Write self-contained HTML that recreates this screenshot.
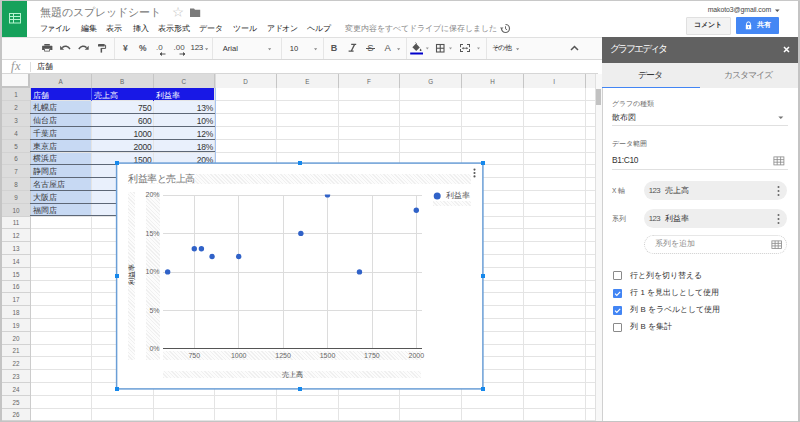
<!DOCTYPE html>
<html lang="ja">
<head>
<meta charset="utf-8">
<style>
html,body{margin:0;padding:0;}
body{width:800px;height:422px;overflow:hidden;position:relative;background:#fff;font-family:"Liberation Sans",sans-serif;color:#333;}
.a{position:absolute;}
.t{position:absolute;white-space:nowrap;line-height:1;}
.sep{position:absolute;width:0.8px;background:#e6e6e6;}
</style>
</head>
<body>
<!-- ===== title bar ===== -->
<div class="a" style="left:2px;top:1px;width:24.5px;height:35.5px;background:#16a15b;"></div>
<svg class="a" style="left:0;top:0" width="30" height="40">
  <g stroke="#b6f5d0" stroke-width="1" fill="none">
    <rect x="9.5" y="13.5" width="11" height="9.5"/>
    <line x1="13.5" y1="13.5" x2="13.5" y2="23"/>
    <line x1="9.5" y1="16.5" x2="20.5" y2="16.5"/>
    <line x1="9.5" y1="19.5" x2="20.5" y2="19.5"/>
  </g>
</svg>
<div class="t" style="left:39.5px;top:7px;font-size:11px;color:#777;">無題のスプレッドシート</div>
<div class="t" style="left:172px;top:6px;font-size:12px;color:#c8c8c8;">☆</div>
<svg class="a" style="left:189px;top:8px" width="12" height="10"><path d="M1 0.5h4l1 1.3h5.2v7.2H1z" fill="#7a7a7a"/></svg>

<div class="t" style="left:39.5px;top:25px;font-size:7.7px;color:#222;letter-spacing:-0.37px;">ファイル</div>
<div class="t" style="left:81px;top:25px;font-size:7.7px;color:#222;">編集</div>
<div class="t" style="left:106px;top:25px;font-size:7.7px;color:#222;">表示</div>
<div class="t" style="left:132.5px;top:25px;font-size:7.7px;color:#222;">挿入</div>
<div class="t" style="left:157.5px;top:25px;font-size:7.7px;color:#222;">表示形式</div>
<div class="t" style="left:199px;top:25px;font-size:7.7px;color:#222;">データ</div>
<div class="t" style="left:233px;top:25px;font-size:7.7px;color:#222;">ツール</div>
<div class="t" style="left:267px;top:25px;font-size:7.7px;color:#222;letter-spacing:-0.5px;">アドオン</div>
<div class="t" style="left:307px;top:25px;font-size:7.7px;color:#222;">ヘルプ</div>
<div class="t" style="left:345px;top:25px;font-size:7.9px;color:#888;">変更内容をすべてドライブに保存しました</div>
<svg class="a" style="left:500px;top:23px" width="11" height="11" viewBox="0 0 11 11"><path d="M5.5 1.5a4 4 0 1 1-4 4" fill="none" stroke="#666" stroke-width="1.2"/><path d="M0 4.5l1.5 2 2-2z" fill="#666"/><path d="M5.5 3.3v2.5l1.6 1" fill="none" stroke="#666" stroke-width="1"/></svg>

<div class="t" style="left:707.7px;top:7px;font-size:6.9px;color:#444;letter-spacing:-0.08px;">makoto3@gmail.com</div>
<svg class="a" style="left:774.5px;top:8.5px" width="5" height="4"><path d="M0 0.5h4.6l-2.3 2.6z" fill="#555"/></svg>
<div class="a" style="left:686.3px;top:16.5px;width:42.5px;height:16.2px;background:#f3f3f3;border:0.6px solid #e0e0e0;border-radius:1px;"></div>
<div class="t" style="left:694px;top:22px;font-size:6.9px;color:#333;font-weight:bold;">コメント</div>
<div class="a" style="left:735.5px;top:16.5px;width:43.5px;height:17.2px;background:#4487f4;border-radius:1px;"></div>
<svg class="a" style="left:745px;top:20.5px" width="7" height="9" viewBox="0 0 7 9"><path d="M1.6 4V2.8a1.9 1.9 0 0 1 3.8 0V4" fill="none" stroke="#fff" stroke-width="1"/><rect x="0.8" y="4" width="5.4" height="4.3" fill="#fff"/><rect x="3" y="5.4" width="1" height="1.4" fill="#4a8af4"/></svg>
<div class="t" style="left:756.5px;top:22px;font-size:6.9px;color:#fff;font-weight:bold;">共有</div>

<!-- ===== toolbar ===== -->
<div class="a" style="left:2px;top:37px;width:600px;height:21.3px;background:#fafafa;border-top:0.8px solid #e0e0e0;border-bottom:0.8px solid #d8d8d8;"></div>


<!-- toolbar icons -->
<svg class="a" style="left:0;top:0" width="120" height="60">
 <g fill="#555">
  <rect x="44.3" y="44" width="5.5" height="1.6"/>
  <path d="M42.6 45.8h9.3a0.5 0.5 0 0 1 0.5 0.5V50h-2.3v-1.8h-5.8V50h-2.2V46.3a0.5 0.5 0 0 1 0.5-0.5z"/>
  <path d="M44.2 48.2h5.6v3.4h-5.6zM45 49v1.8h4V49z" fill-rule="evenodd"/>
 </g>
 <path d="M62.2 47.6c2.6-2 5.6-1.9 7.8 1.4" fill="none" stroke="#555" stroke-width="1.4"/>
 <path d="M60.1 45.8v4h4z" fill="#555"/>
 <path d="M86.6 47.6c-2.6-2-5.6-1.9-7.8 1.4" fill="none" stroke="#555" stroke-width="1.4"/>
 <path d="M88.7 45.8v4h-4z" fill="#555"/>
 <rect x="98" y="44" width="6.6" height="2.6" rx="0.4" fill="#555"/>
 <path d="M104.4 45.3h1.2v3.1h-4.3v1" fill="none" stroke="#555" stroke-width="1"/>
 <rect x="100.6" y="48.3" width="1.5" height="4.3" fill="#555"/>
</svg>
<div class="sep" style="left:113.5px;top:38px;height:21px;"></div>
<div class="t" style="left:123px;top:43.5px;font-size:8.5px;color:#555;font-weight:bold;">¥</div>
<div class="t" style="left:138.9px;top:43.8px;font-size:8.5px;color:#555;font-weight:bold;">%</div>
<div class="t" style="left:156px;top:44.3px;font-size:8px;color:#555;">.0</div>
<svg class="a" style="left:159px;top:52px" width="7" height="4"><path d="M6.5 2H1.5M3 0.5L1 2l2 1.5" stroke="#555" stroke-width="1" fill="#555"/></svg>
<div class="t" style="left:173.5px;top:44.3px;font-size:8px;color:#555;">.00</div>
<svg class="a" style="left:178.5px;top:52px" width="7" height="4"><path d="M0.5 2H5.5M4 0.5L6 2l-2 1.5" stroke="#555" stroke-width="1" fill="#555"/></svg>
<div class="t" style="left:190.5px;top:44.3px;font-size:8px;color:#444;letter-spacing:-0.3px;">123</div>
<svg class="a" style="left:204.6px;top:47.8px" width="4" height="3"><path d="M0 0.3h3.2l-1.6 2z" fill="#888"/></svg>
<div class="sep" style="left:212.2px;top:38px;height:21px;"></div>
<div class="t" style="left:222.7px;top:44.6px;font-size:7.6px;color:#333;">Arial</div>
<svg class="a" style="left:268.3px;top:47.5px" width="4" height="3"><path d="M0 0.3h3.2l-1.6 2z" fill="#888"/></svg>
<div class="sep" style="left:280.5px;top:38px;height:21px;"></div>
<div class="t" style="left:289.8px;top:44.6px;font-size:7.6px;color:#333;">10</div>
<svg class="a" style="left:314px;top:47.5px" width="4" height="3"><path d="M0 0.3h3.2l-1.6 2z" fill="#888"/></svg>
<div class="sep" style="left:322.6px;top:38px;height:21px;"></div>
<div class="t" style="left:330.8px;top:43.8px;font-size:9px;color:#555;font-weight:bold;">B</div>
<svg class="a" style="left:0;top:0" width="360" height="60"><path d="M351.2 44.4h5M348.6 51.2h5M354.6 44.4l-3.4 6.8" stroke="#555" stroke-width="1.3" fill="none"/></svg>
<div class="t" style="left:367.2px;top:43.2px;font-size:9.5px;color:#555;">S</div><div class="a" style="left:366px;top:47.6px;width:9px;height:1.1px;background:#555;"></div>
<div class="t" style="left:384.5px;top:43px;font-size:9.5px;color:#555;">A</div>
<svg class="a" style="left:397.3px;top:47.5px" width="4" height="3"><path d="M0 0.3h3.2l-1.6 2z" fill="#888"/></svg>
<div class="sep" style="left:406.2px;top:38px;height:21px;"></div>
<svg class="a" style="left:0;top:0" width="490" height="60">
 <path d="M415.6 42.6l1 1" stroke="#555" stroke-width="1"/>
 <path d="M416 43.6l3.8 3.8-3.6 3.6-3.8-3.8z" fill="#555"/>
 <path d="M420.6 48.6c0.5 0.7 0.9 1.2 0.9 1.6a0.9 0.9 0 0 1-1.8 0c0-0.4 0.4-0.9 0.9-1.6z" fill="#555"/>
 <rect x="410.2" y="52.5" width="12.8" height="2" fill="#0000cc"/>
 <path d="M425.8 47.6h3l-1.5 1.8z" fill="#999"/>
 <g fill="none" stroke="#555" stroke-width="1.1"><rect x="436.5" y="44.5" width="7.5" height="7.5"/><line x1="440.25" y1="44.5" x2="440.25" y2="52"/><line x1="436.5" y1="48.25" x2="444" y2="48.25"/></g>
 <path d="M449 47.6h3l-1.5 1.8z" fill="#999"/>
 <g fill="#555"><path d="M460 44h3v1h-2v2.2h-1zM460 49h1v2h2v1h-3zM467 44h3v3.2h-1V45h-2zM469 49h1v3h-3v-1h2z"/><path d="M461.8 48.2l1.8-1.3v2.6zM468.2 48.2l-1.8-1.3v2.6z"/><rect x="463" y="47.8" width="4" height="0.8"/></g>
 <path d="M477 47.6h3l-1.5 1.8z" fill="#999"/>
</svg>
<div class="sep" style="left:486px;top:38px;height:21px;"></div>
<div class="t" style="left:491.6px;top:44px;font-size:7.2px;color:#222;letter-spacing:-0.1px;">その他</div>
<svg class="a" style="left:516px;top:47.5px" width="4" height="3"><path d="M0 0.3h3.2l-1.6 2z" fill="#888"/></svg>
<svg class="a" style="left:570px;top:45px" width="9" height="6" viewBox="0 0 9 6"><path d="M1 5l3.5-3.5L8 5" fill="none" stroke="#555" stroke-width="1.5"/></svg>

<!-- ===== grid ===== -->
<div id="grid">
<div class="a" style="left:2px;top:73.5px;width:593px;height:14.5px;background:#f3f3f3;"></div>
<div class="a" style="left:30px;top:73.5px;width:185.5px;height:14.5px;background:#dcdcdc;"></div>
<div class="a" style="left:2px;top:88px;width:28px;height:334px;background:#f3f3f3;"></div>
<div class="a" style="left:2px;top:88px;width:28px;height:128px;background:#dcdcdc;"></div>
<div class="a" style="left:2px;top:73.5px;width:26px;height:12.5px;background:#f8f8f8;"></div>
<div class="a" style="left:28px;top:73.5px;width:2px;height:14.5px;background:#c4c4c4;"></div>
<div class="a" style="left:2px;top:86px;width:28px;height:2px;background:#c4c4c4;"></div>
<div class="a" style="left:30px;top:88.3px;width:185.2px;height:12.6px;background:#1818e6;"></div>
<div class="a" style="left:30px;top:100.8px;width:61.25px;height:115.2px;background:#c7d9f3;"></div>
<div class="a" style="left:91.25px;top:100.8px;width:123.95px;height:115.2px;background:#e9f0fc;"></div>
<div class="a" style="left:30px;top:100.30px;width:565px;height:0.8px;background:#e4e4e4;"></div>
<div class="a" style="left:2px;top:100.30px;width:28px;height:0.8px;background:#d2d2d2;"></div>
<div class="a" style="left:30px;top:113.10px;width:565px;height:0.8px;background:#e4e4e4;"></div>
<div class="a" style="left:2px;top:113.10px;width:28px;height:0.8px;background:#d2d2d2;"></div>
<div class="a" style="left:30px;top:125.90px;width:565px;height:0.8px;background:#e4e4e4;"></div>
<div class="a" style="left:2px;top:125.90px;width:28px;height:0.8px;background:#d2d2d2;"></div>
<div class="a" style="left:30px;top:138.70px;width:565px;height:0.8px;background:#e4e4e4;"></div>
<div class="a" style="left:2px;top:138.70px;width:28px;height:0.8px;background:#d2d2d2;"></div>
<div class="a" style="left:30px;top:151.50px;width:565px;height:0.8px;background:#e4e4e4;"></div>
<div class="a" style="left:2px;top:151.50px;width:28px;height:0.8px;background:#d2d2d2;"></div>
<div class="a" style="left:30px;top:164.30px;width:565px;height:0.8px;background:#e4e4e4;"></div>
<div class="a" style="left:2px;top:164.30px;width:28px;height:0.8px;background:#d2d2d2;"></div>
<div class="a" style="left:30px;top:177.10px;width:565px;height:0.8px;background:#e4e4e4;"></div>
<div class="a" style="left:2px;top:177.10px;width:28px;height:0.8px;background:#d2d2d2;"></div>
<div class="a" style="left:30px;top:189.90px;width:565px;height:0.8px;background:#e4e4e4;"></div>
<div class="a" style="left:2px;top:189.90px;width:28px;height:0.8px;background:#d2d2d2;"></div>
<div class="a" style="left:30px;top:202.70px;width:565px;height:0.8px;background:#e4e4e4;"></div>
<div class="a" style="left:2px;top:202.70px;width:28px;height:0.8px;background:#d2d2d2;"></div>
<div class="a" style="left:30px;top:215.50px;width:565px;height:0.8px;background:#e4e4e4;"></div>
<div class="a" style="left:2px;top:215.50px;width:28px;height:0.8px;background:#d2d2d2;"></div>
<div class="a" style="left:30px;top:228.30px;width:565px;height:0.8px;background:#e4e4e4;"></div>
<div class="a" style="left:2px;top:228.30px;width:28px;height:0.8px;background:#d2d2d2;"></div>
<div class="a" style="left:30px;top:241.10px;width:565px;height:0.8px;background:#e4e4e4;"></div>
<div class="a" style="left:2px;top:241.10px;width:28px;height:0.8px;background:#d2d2d2;"></div>
<div class="a" style="left:30px;top:253.90px;width:565px;height:0.8px;background:#e4e4e4;"></div>
<div class="a" style="left:2px;top:253.90px;width:28px;height:0.8px;background:#d2d2d2;"></div>
<div class="a" style="left:30px;top:266.70px;width:565px;height:0.8px;background:#e4e4e4;"></div>
<div class="a" style="left:2px;top:266.70px;width:28px;height:0.8px;background:#d2d2d2;"></div>
<div class="a" style="left:30px;top:279.50px;width:565px;height:0.8px;background:#e4e4e4;"></div>
<div class="a" style="left:2px;top:279.50px;width:28px;height:0.8px;background:#d2d2d2;"></div>
<div class="a" style="left:30px;top:292.30px;width:565px;height:0.8px;background:#e4e4e4;"></div>
<div class="a" style="left:2px;top:292.30px;width:28px;height:0.8px;background:#d2d2d2;"></div>
<div class="a" style="left:30px;top:305.10px;width:565px;height:0.8px;background:#e4e4e4;"></div>
<div class="a" style="left:2px;top:305.10px;width:28px;height:0.8px;background:#d2d2d2;"></div>
<div class="a" style="left:30px;top:317.90px;width:565px;height:0.8px;background:#e4e4e4;"></div>
<div class="a" style="left:2px;top:317.90px;width:28px;height:0.8px;background:#d2d2d2;"></div>
<div class="a" style="left:30px;top:330.70px;width:565px;height:0.8px;background:#e4e4e4;"></div>
<div class="a" style="left:2px;top:330.70px;width:28px;height:0.8px;background:#d2d2d2;"></div>
<div class="a" style="left:30px;top:343.50px;width:565px;height:0.8px;background:#e4e4e4;"></div>
<div class="a" style="left:2px;top:343.50px;width:28px;height:0.8px;background:#d2d2d2;"></div>
<div class="a" style="left:30px;top:356.30px;width:565px;height:0.8px;background:#e4e4e4;"></div>
<div class="a" style="left:2px;top:356.30px;width:28px;height:0.8px;background:#d2d2d2;"></div>
<div class="a" style="left:30px;top:369.10px;width:565px;height:0.8px;background:#e4e4e4;"></div>
<div class="a" style="left:2px;top:369.10px;width:28px;height:0.8px;background:#d2d2d2;"></div>
<div class="a" style="left:30px;top:381.90px;width:565px;height:0.8px;background:#e4e4e4;"></div>
<div class="a" style="left:2px;top:381.90px;width:28px;height:0.8px;background:#d2d2d2;"></div>
<div class="a" style="left:30px;top:394.70px;width:565px;height:0.8px;background:#e4e4e4;"></div>
<div class="a" style="left:2px;top:394.70px;width:28px;height:0.8px;background:#d2d2d2;"></div>
<div class="a" style="left:30px;top:407.50px;width:565px;height:0.8px;background:#e4e4e4;"></div>
<div class="a" style="left:2px;top:407.50px;width:28px;height:0.8px;background:#d2d2d2;"></div>
<div class="a" style="left:30px;top:420.30px;width:565px;height:0.8px;background:#e4e4e4;"></div>
<div class="a" style="left:2px;top:420.30px;width:28px;height:0.8px;background:#d2d2d2;"></div>
<div class="a" style="left:90.85px;top:88px;width:0.8px;height:334px;background:#e4e4e4;"></div>
<div class="a" style="left:90.85px;top:73.5px;width:0.8px;height:14.5px;background:#c6c6c6;"></div>
<div class="a" style="left:152.57px;top:88px;width:0.8px;height:334px;background:#e4e4e4;"></div>
<div class="a" style="left:152.57px;top:73.5px;width:0.8px;height:14.5px;background:#c6c6c6;"></div>
<div class="a" style="left:214.29px;top:88px;width:0.8px;height:334px;background:#e4e4e4;"></div>
<div class="a" style="left:214.29px;top:73.5px;width:0.8px;height:14.5px;background:#c6c6c6;"></div>
<div class="a" style="left:276.01px;top:88px;width:0.8px;height:334px;background:#e4e4e4;"></div>
<div class="a" style="left:276.01px;top:73.5px;width:0.8px;height:14.5px;background:#c6c6c6;"></div>
<div class="a" style="left:337.73px;top:88px;width:0.8px;height:334px;background:#e4e4e4;"></div>
<div class="a" style="left:337.73px;top:73.5px;width:0.8px;height:14.5px;background:#c6c6c6;"></div>
<div class="a" style="left:399.45px;top:88px;width:0.8px;height:334px;background:#e4e4e4;"></div>
<div class="a" style="left:399.45px;top:73.5px;width:0.8px;height:14.5px;background:#c6c6c6;"></div>
<div class="a" style="left:461.17px;top:88px;width:0.8px;height:334px;background:#e4e4e4;"></div>
<div class="a" style="left:461.17px;top:73.5px;width:0.8px;height:14.5px;background:#c6c6c6;"></div>
<div class="a" style="left:522.89px;top:88px;width:0.8px;height:334px;background:#e4e4e4;"></div>
<div class="a" style="left:522.89px;top:73.5px;width:0.8px;height:14.5px;background:#c6c6c6;"></div>
<div class="a" style="left:584.61px;top:88px;width:0.8px;height:334px;background:#e4e4e4;"></div>
<div class="a" style="left:584.61px;top:73.5px;width:0.8px;height:14.5px;background:#c6c6c6;"></div>
<div class="a" style="left:29.9px;top:88px;width:0.8px;height:334px;background:#cccccc;"></div>
<div class="a" style="left:30px;top:113.00px;width:185px;height:1px;background:#5d6776;"></div>
<div class="a" style="left:30px;top:125.80px;width:185px;height:1px;background:#5d6776;"></div>
<div class="a" style="left:30px;top:138.60px;width:185px;height:1px;background:#5d6776;"></div>
<div class="a" style="left:30px;top:151.40px;width:185px;height:1px;background:#5d6776;"></div>
<div class="a" style="left:30px;top:164.20px;width:185px;height:1px;background:#5d6776;"></div>
<div class="a" style="left:30px;top:177.00px;width:185px;height:1px;background:#5d6776;"></div>
<div class="a" style="left:30px;top:189.80px;width:185px;height:1px;background:#5d6776;"></div>
<div class="a" style="left:30px;top:202.60px;width:185px;height:1px;background:#5d6776;"></div>
<div class="a" style="left:30px;top:215.40px;width:185px;height:1px;background:#5d6776;"></div>
<div class="a" style="left:214.7px;top:88.3px;width:1px;height:128px;background:#a6c4f2;"></div>
<div class="a" style="left:90.85px;top:88.3px;width:0.8px;height:12.5px;background:#4a5cf0;"></div>
<div class="a" style="left:152.57px;top:88.3px;width:0.8px;height:12.5px;background:#1818e6;"></div>
<div class="t" style="left:50.62px;width:20px;text-align:center;top:78.5px;font-size:6.3px;color:#666;">A</div>
<div class="t" style="left:112.11px;width:20px;text-align:center;top:78.5px;font-size:6.3px;color:#666;">B</div>
<div class="t" style="left:173.83px;width:20px;text-align:center;top:78.5px;font-size:6.3px;color:#666;">C</div>
<div class="t" style="left:235.55px;width:20px;text-align:center;top:78.5px;font-size:6.3px;color:#666;">D</div>
<div class="t" style="left:297.27px;width:20px;text-align:center;top:78.5px;font-size:6.3px;color:#666;">E</div>
<div class="t" style="left:358.99px;width:20px;text-align:center;top:78.5px;font-size:6.3px;color:#666;">F</div>
<div class="t" style="left:420.71px;width:20px;text-align:center;top:78.5px;font-size:6.3px;color:#666;">G</div>
<div class="t" style="left:482.43px;width:20px;text-align:center;top:78.5px;font-size:6.3px;color:#666;">H</div>
<div class="t" style="left:544.15px;width:20px;text-align:center;top:78.5px;font-size:6.3px;color:#666;">I</div>
<div class="t" style="left:2px;width:28px;text-align:center;top:92.40px;font-size:6.3px;color:#666;">1</div>
<div class="t" style="left:2px;width:28px;text-align:center;top:105.20px;font-size:6.3px;color:#666;">2</div>
<div class="t" style="left:2px;width:28px;text-align:center;top:118.00px;font-size:6.3px;color:#666;">3</div>
<div class="t" style="left:2px;width:28px;text-align:center;top:130.80px;font-size:6.3px;color:#666;">4</div>
<div class="t" style="left:2px;width:28px;text-align:center;top:143.60px;font-size:6.3px;color:#666;">5</div>
<div class="t" style="left:2px;width:28px;text-align:center;top:156.40px;font-size:6.3px;color:#666;">6</div>
<div class="t" style="left:2px;width:28px;text-align:center;top:169.20px;font-size:6.3px;color:#666;">7</div>
<div class="t" style="left:2px;width:28px;text-align:center;top:182.00px;font-size:6.3px;color:#666;">8</div>
<div class="t" style="left:2px;width:28px;text-align:center;top:194.80px;font-size:6.3px;color:#666;">9</div>
<div class="t" style="left:2px;width:28px;text-align:center;top:207.60px;font-size:6.3px;color:#666;">10</div>
<div class="t" style="left:2px;width:28px;text-align:center;top:220.40px;font-size:6.3px;color:#666;">11</div>
<div class="t" style="left:2px;width:28px;text-align:center;top:233.20px;font-size:6.3px;color:#666;">12</div>
<div class="t" style="left:2px;width:28px;text-align:center;top:246.00px;font-size:6.3px;color:#666;">13</div>
<div class="t" style="left:2px;width:28px;text-align:center;top:258.80px;font-size:6.3px;color:#666;">14</div>
<div class="t" style="left:2px;width:28px;text-align:center;top:271.60px;font-size:6.3px;color:#666;">15</div>
<div class="t" style="left:2px;width:28px;text-align:center;top:284.40px;font-size:6.3px;color:#666;">16</div>
<div class="t" style="left:2px;width:28px;text-align:center;top:297.20px;font-size:6.3px;color:#666;">17</div>
<div class="t" style="left:2px;width:28px;text-align:center;top:310.00px;font-size:6.3px;color:#666;">18</div>
<div class="t" style="left:2px;width:28px;text-align:center;top:322.80px;font-size:6.3px;color:#666;">19</div>
<div class="t" style="left:2px;width:28px;text-align:center;top:335.60px;font-size:6.3px;color:#666;">20</div>
<div class="t" style="left:2px;width:28px;text-align:center;top:348.40px;font-size:6.3px;color:#666;">21</div>
<div class="t" style="left:2px;width:28px;text-align:center;top:361.20px;font-size:6.3px;color:#666;">22</div>
<div class="t" style="left:2px;width:28px;text-align:center;top:374.00px;font-size:6.3px;color:#666;">23</div>
<div class="t" style="left:2px;width:28px;text-align:center;top:386.80px;font-size:6.3px;color:#666;">24</div>
<div class="t" style="left:2px;width:28px;text-align:center;top:399.60px;font-size:6.3px;color:#666;">25</div>
<div class="t" style="left:2px;width:28px;text-align:center;top:412.40px;font-size:6.3px;color:#666;">26</div>
<div class="t" style="left:32.5px;top:92.10px;font-size:8px;color:#fff;">店舗</div>
<div class="t" style="left:32.5px;top:104.10px;font-size:8px;color:#333;">札幌店</div>
<div class="t" style="left:32.5px;top:116.90px;font-size:8px;color:#333;">仙台店</div>
<div class="t" style="left:32.5px;top:129.70px;font-size:8px;color:#333;">千葉店</div>
<div class="t" style="left:32.5px;top:142.50px;font-size:8px;color:#333;">東京店</div>
<div class="t" style="left:32.5px;top:155.30px;font-size:8px;color:#333;">横浜店</div>
<div class="t" style="left:32.5px;top:168.10px;font-size:8px;color:#333;">静岡店</div>
<div class="t" style="left:32.5px;top:180.90px;font-size:8px;color:#333;">名古屋店</div>
<div class="t" style="left:32.5px;top:193.70px;font-size:8px;color:#333;">大阪店</div>
<div class="t" style="left:32.5px;top:206.50px;font-size:8px;color:#333;">福岡店</div>
<div class="t" style="left:93.5px;top:92.10px;font-size:8px;color:#fff;">売上高</div>
<div class="t" style="left:155.5px;top:92.10px;font-size:8px;color:#fff;">利益率</div>
<div class="t" style="left:91px;width:60.5px;text-align:right;top:104.30px;font-size:8.5px;letter-spacing:-0.25px;color:#333;">750</div>
<div class="t" style="left:153px;width:60px;text-align:right;top:104.30px;font-size:8.5px;letter-spacing:-0.25px;color:#333;">13%</div>
<div class="t" style="left:91px;width:60.5px;text-align:right;top:117.10px;font-size:8.5px;letter-spacing:-0.25px;color:#333;">600</div>
<div class="t" style="left:153px;width:60px;text-align:right;top:117.10px;font-size:8.5px;letter-spacing:-0.25px;color:#333;">10%</div>
<div class="t" style="left:91px;width:60.5px;text-align:right;top:129.90px;font-size:8.5px;letter-spacing:-0.25px;color:#333;">1000</div>
<div class="t" style="left:153px;width:60px;text-align:right;top:129.90px;font-size:8.5px;letter-spacing:-0.25px;color:#333;">12%</div>
<div class="t" style="left:91px;width:60.5px;text-align:right;top:142.70px;font-size:8.5px;letter-spacing:-0.25px;color:#333;">2000</div>
<div class="t" style="left:153px;width:60px;text-align:right;top:142.70px;font-size:8.5px;letter-spacing:-0.25px;color:#333;">18%</div>
<div class="t" style="left:91px;width:60.5px;text-align:right;top:155.50px;font-size:8.5px;letter-spacing:-0.25px;color:#333;">1500</div>
<div class="t" style="left:153px;width:60px;text-align:right;top:155.50px;font-size:8.5px;letter-spacing:-0.25px;color:#333;">20%</div>
</div>
<!-- ===== formula bar ===== -->
<div class="t" style="left:11px;top:59.8px;font-family:'Liberation Serif',serif;font-style:italic;font-size:12.5px;color:#999;letter-spacing:0.6px;">fx</div>
<div class="sep" style="left:30px;top:62px;height:10px;background:#ddd;"></div>
<div class="t" style="left:36.5px;top:62.5px;font-size:8px;color:#222;">店舗</div>
<div class="a" style="left:2px;top:72.7px;width:596px;height:0.8px;background:#d6d6d6;"></div>


<!-- ===== chart ===== -->
<div class="a" style="left:116.5px;top:163.1px;width:366.4px;height:225.9px;background:#fff;"></div>
<div class="a" style="left:128px;top:174.3px;width:343px;height:9.5px;background:repeating-linear-gradient(45deg,#f0f0f0 0 1px,#fcfcfc 1px 2.6px);"></div>
<div class="t" style="left:128px;top:173.6px;font-size:9.7px;color:#757575;background:#fff;letter-spacing:-0.47px;">利益率と売上高</div>
<svg class="a" style="left:472.5px;top:167px" width="3" height="12"><circle cx="1.5" cy="2.6" r="1.05" fill="#555"/><circle cx="1.5" cy="6" r="1.05" fill="#555"/><circle cx="1.5" cy="9.4" r="1.05" fill="#555"/></svg>
<div class="a" style="left:127.8px;top:191.5px;width:7px;height:168px;background:repeating-linear-gradient(45deg,#f0f0f0 0 1px,#fcfcfc 1px 2.6px);"></div>
<div class="t" style="left:122.5px;top:276px;font-size:6.8px;color:#222;transform:translate(0,-50%) rotate(-90deg);transform-origin:50% 50%;width:18px;text-align:center;">利益率</div>
<div class="a" style="left:146px;top:191.5px;width:14px;height:168px;background:repeating-linear-gradient(45deg,#f0f0f0 0 1px,#fcfcfc 1px 2.6px);"></div>
<div class="a" style="left:163px;top:351.4px;width:258px;height:8.3px;background:repeating-linear-gradient(45deg,#f0f0f0 0 1px,#fcfcfc 1px 2.6px);"></div>
<div class="a" style="left:163px;top:371px;width:258px;height:6.7px;background:repeating-linear-gradient(45deg,#f0f0f0 0 1px,#fcfcfc 1px 2.6px);"></div>
<div class="a" style="left:433px;top:200.5px;width:38px;height:5.5px;background:repeating-linear-gradient(45deg,#f0f0f0 0 1px,#fcfcfc 1px 2.6px);"></div>
<div class="a" style="left:162.8px;top:194.50px;width:259px;height:0.8px;background:#dcdcdc;"></div>
<div class="a" style="left:162.8px;top:233.00px;width:259px;height:0.8px;background:#dcdcdc;"></div>
<div class="a" style="left:162.8px;top:271.50px;width:259px;height:0.8px;background:#dcdcdc;"></div>
<div class="a" style="left:162.8px;top:310.00px;width:259px;height:0.8px;background:#dcdcdc;"></div>
<div class="a" style="left:193.90px;top:194.90px;width:0.8px;height:154.00px;background:#dcdcdc;"></div>
<div class="a" style="left:238.30px;top:194.90px;width:0.8px;height:154.00px;background:#dcdcdc;"></div>
<div class="a" style="left:282.70px;top:194.90px;width:0.8px;height:154.00px;background:#dcdcdc;"></div>
<div class="a" style="left:327.10px;top:194.90px;width:0.8px;height:154.00px;background:#dcdcdc;"></div>
<div class="a" style="left:371.50px;top:194.90px;width:0.8px;height:154.00px;background:#dcdcdc;"></div>
<div class="a" style="left:415.90px;top:194.90px;width:0.8px;height:154.00px;background:#dcdcdc;"></div>
<div class="a" style="left:162.8px;top:347.9px;width:259px;height:1px;background:#555;"></div>
<div class="t" style="left:130px;width:29.5px;text-align:right;top:191.30px;font-size:7px;color:#666;">20%</div>
<div class="t" style="left:130px;width:29.5px;text-align:right;top:229.80px;font-size:7px;color:#666;">15%</div>
<div class="t" style="left:130px;width:29.5px;text-align:right;top:268.30px;font-size:7px;color:#666;">10%</div>
<div class="t" style="left:130px;width:29.5px;text-align:right;top:306.80px;font-size:7px;color:#666;">5%</div>
<div class="t" style="left:130px;width:29.5px;text-align:right;top:345.30px;font-size:7px;color:#666;">0%</div>
<div class="t" style="left:179.30px;width:30px;text-align:center;top:351.6px;font-size:7px;color:#666;">750</div>
<div class="t" style="left:223.70px;width:30px;text-align:center;top:351.6px;font-size:7px;color:#666;">1000</div>
<div class="t" style="left:268.10px;width:30px;text-align:center;top:351.6px;font-size:7px;color:#666;">1250</div>
<div class="t" style="left:312.50px;width:30px;text-align:center;top:351.6px;font-size:7px;color:#666;">1500</div>
<div class="t" style="left:356.90px;width:30px;text-align:center;top:351.6px;font-size:7px;color:#666;">1750</div>
<div class="t" style="left:401.30px;width:30px;text-align:center;top:351.6px;font-size:7px;color:#666;">2000</div>
<div class="t" style="left:272px;width:40px;text-align:center;top:370.5px;font-size:7.3px;color:#333;">売上高</div>
<svg class="a" style="left:0;top:0" width="800" height="422"><defs><clipPath id="pc"><rect x="150" y="194.6" width="280" height="160"/></clipPath></defs><g clip-path="url(#pc)"><circle cx="167.66" cy="271.90" r="2.7" fill="#3062c8"/><circle cx="194.30" cy="248.80" r="2.7" fill="#3062c8"/><circle cx="201.40" cy="248.80" r="2.7" fill="#3062c8"/><circle cx="212.06" cy="256.50" r="2.7" fill="#3062c8"/><circle cx="238.70" cy="256.50" r="2.7" fill="#3062c8"/><circle cx="300.86" cy="233.40" r="2.7" fill="#3062c8"/><circle cx="327.50" cy="194.90" r="2.7" fill="#3062c8"/><circle cx="359.47" cy="271.90" r="2.7" fill="#3062c8"/><circle cx="416.30" cy="210.30" r="2.7" fill="#3062c8"/></g><circle cx="437.2" cy="196" r="3.5" fill="#3062c8"/></svg>
<div class="t" style="left:446.2px;top:191.8px;font-size:8.2px;color:#555;">利益率</div>
<svg class="a" style="left:0;top:0" width="800" height="422"><rect x="116.6" y="163.1" width="366.3" height="225.8" fill="none" stroke="#6a9ed6" stroke-width="1.5"/></svg>
<div class="a" style="left:114.50px;top:161.10px;width:4.2px;height:4.2px;background:#1588ec;"></div>
<div class="a" style="left:114.50px;top:274.05px;width:4.2px;height:4.2px;background:#1588ec;"></div>
<div class="a" style="left:114.50px;top:387.00px;width:4.2px;height:4.2px;background:#1588ec;"></div>
<div class="a" style="left:297.70px;top:161.10px;width:4.2px;height:4.2px;background:#1588ec;"></div>
<div class="a" style="left:297.70px;top:387.00px;width:4.2px;height:4.2px;background:#1588ec;"></div>
<div class="a" style="left:480.90px;top:161.10px;width:4.2px;height:4.2px;background:#1588ec;"></div>
<div class="a" style="left:480.90px;top:274.05px;width:4.2px;height:4.2px;background:#1588ec;"></div>
<div class="a" style="left:480.90px;top:387.00px;width:4.2px;height:4.2px;background:#1588ec;"></div>
<!-- ===== scrollbar ===== -->
<div class="a" style="left:594.6px;top:73.5px;width:7px;height:349px;background:#f8f8f8;border-left:0.8px solid #e0e0e0;box-sizing:border-box;"></div>
<div class="a" style="left:595.8px;top:88.5px;width:5px;height:16.5px;background:#c2c2c2;"></div>
<!-- ===== side panel ===== -->
<div class="a" style="left:601.5px;top:37.3px;width:196px;height:385px;background:#fff;border-left:0.8px solid #d0d0d0;box-sizing:border-box;"></div>
<div class="a" style="left:601.5px;top:37.3px;width:196px;height:25.5px;background:#616161;"></div>
<div class="t" style="left:609.7px;top:44.3px;font-size:9.5px;color:#fff;letter-spacing:-2px;">グラフエディタ</div>
<svg class="a" style="left:782.7px;top:45.8px" width="7" height="7" viewBox="0 0 7 7"><path d="M1 1L6 6M6 1L1 6" stroke="#fff" stroke-width="1.5"/></svg>
<div class="a" style="left:601.5px;top:62.8px;width:196px;height:25.5px;background:#eeeeee;"></div>
<div class="a" style="left:601.5px;top:86.8px;width:98.2px;height:1.4px;background:#4285f4;"></div>
<div class="t" style="left:601.5px;width:98px;text-align:center;top:71.3px;font-size:9.3px;color:#333;letter-spacing:-1.3px;text-indent:-1.3px;">データ</div>
<div class="t" style="left:699.7px;width:98px;text-align:center;top:71.3px;font-size:9.3px;color:#777;letter-spacing:-0.9px;text-indent:-0.9px;">カスタマイズ</div>

<div class="t" style="left:612px;top:100.8px;font-size:6.8px;color:#666;">グラフの種類</div>
<div class="t" style="left:612px;top:113.5px;font-size:8px;color:#333;">散布図</div>
<svg class="a" style="left:777.5px;top:115.5px" width="6" height="4"><path d="M0.3 0.5h5l-2.5 2.6z" fill="#757575"/></svg>
<div class="a" style="left:612px;top:125px;width:175.5px;height:0.8px;background:#e0e0e0;"></div>

<div class="t" style="left:612px;top:141px;font-size:6.8px;color:#666;">データ範囲</div>
<div class="t" style="left:612px;top:155.7px;font-size:8.4px;color:#333;letter-spacing:-0.3px;">B1:C10</div>
<svg class="a" style="left:772.5px;top:155.5px" width="12" height="10" viewBox="0 0 12 10"><g stroke="#888" stroke-width="0.8" fill="none"><rect x="0.9" y="0.9" width="10" height="8"/><line x1="4.2" y1="0.9" x2="4.2" y2="8.9"/><line x1="7.6" y1="0.9" x2="7.6" y2="8.9"/><line x1="0.9" y1="3.6" x2="10.9" y2="3.6"/><line x1="0.9" y1="6.2" x2="10.9" y2="6.2"/></g></svg>
<div class="a" style="left:612px;top:169.3px;width:175.5px;height:0.8px;background:#e0e0e0;"></div>

<div class="t" style="left:612px;top:188px;font-size:6.5px;color:#666;">X 軸</div>
<div class="a" style="left:643.7px;top:181.2px;width:143.8px;height:19.3px;background:#eeeeee;border-radius:10px;"></div>
<div class="t" style="left:648.7px;top:187.4px;font-size:7.8px;color:#555;letter-spacing:-0.5px;">123</div>
<div class="t" style="left:664.5px;top:187.2px;font-size:8px;color:#333;">売上高</div>
<svg class="a" style="left:776.5px;top:185px" width="3" height="12"><circle cx="1.5" cy="2" r="1" fill="#666"/><circle cx="1.5" cy="6" r="1" fill="#666"/><circle cx="1.5" cy="10" r="1" fill="#666"/></svg>

<div class="t" style="left:612px;top:215.5px;font-size:6.5px;color:#666;">系列</div>
<div class="a" style="left:643.7px;top:208.7px;width:143.8px;height:19.3px;background:#eeeeee;border-radius:10px;"></div>
<div class="t" style="left:648.7px;top:215px;font-size:7.8px;color:#555;letter-spacing:-0.5px;">123</div>
<div class="t" style="left:664.5px;top:214.8px;font-size:8px;color:#333;">利益率</div>
<svg class="a" style="left:776.5px;top:212.5px" width="3" height="12"><circle cx="1.5" cy="2" r="1" fill="#666"/><circle cx="1.5" cy="6" r="1" fill="#666"/><circle cx="1.5" cy="10" r="1" fill="#666"/></svg>

<div class="a" style="left:643.7px;top:234.5px;width:143.8px;height:19.3px;background:#fff;border:1px dotted #cfcfcf;border-radius:10px;box-sizing:border-box;"></div>
<div class="t" style="left:654.5px;top:240.4px;font-size:7.6px;color:#8a8a8a;">系列を追加</div>
<svg class="a" style="left:770.5px;top:239.5px" width="12" height="10" viewBox="0 0 12 10"><g stroke="#888" stroke-width="0.8" fill="none"><rect x="0.9" y="0.9" width="9.5" height="7.5"/><line x1="4.1" y1="0.9" x2="4.1" y2="8.4"/><line x1="7.2" y1="0.9" x2="7.2" y2="8.4"/><line x1="0.9" y1="3.4" x2="10.4" y2="3.4"/><line x1="0.9" y1="5.9" x2="10.4" y2="5.9"/></g></svg>

<div class="a" style="left:613px;top:271.4px;width:9px;height:9px;border:1.2px solid #8a8a8a;border-radius:1px;box-sizing:border-box;"></div>
<div class="t" style="left:630.4px;top:272px;font-size:7.8px;color:#333;">行と列を切り替える</div>
<div class="a" style="left:613px;top:288.6px;width:9px;height:9px;background:#4285f4;border-radius:1px;"></div>
<svg class="a" style="left:613px;top:288.6px" width="9" height="9"><path d="M2 4.6l1.8 1.8L7.2 2.8" stroke="#fff" stroke-width="1.2" fill="none"/></svg>
<div class="t" style="left:630.4px;top:289px;font-size:7.8px;color:#333;">行 1 を見出しとして使用</div>
<div class="a" style="left:613px;top:305.6px;width:9px;height:9px;background:#4285f4;border-radius:1px;"></div>
<svg class="a" style="left:613px;top:305.6px" width="9" height="9"><path d="M2 4.6l1.8 1.8L7.2 2.8" stroke="#fff" stroke-width="1.2" fill="none"/></svg>
<div class="t" style="left:630.4px;top:306px;font-size:7.8px;color:#333;">列 B をラベルとして使用</div>
<div class="a" style="left:613px;top:322.6px;width:9px;height:9px;border:1.2px solid #8a8a8a;border-radius:1px;box-sizing:border-box;"></div>
<div class="t" style="left:630.4px;top:323px;font-size:7.8px;color:#333;">列 B を集計</div>

<!-- ===== frame ===== -->
<div class="a" style="left:0;top:0;width:2px;height:422px;background:#c4c4c4;"></div>
<div class="a" style="left:797.5px;top:0;width:2.5px;height:422px;background:#c4c4c4;"></div>
<div class="a" style="left:0;top:0;width:800px;height:1px;background:#c8c8c8;"></div>
<div class="a" style="left:0;top:421px;width:800px;height:1px;background:#c4c4c4;"></div>

</body>
</html>
